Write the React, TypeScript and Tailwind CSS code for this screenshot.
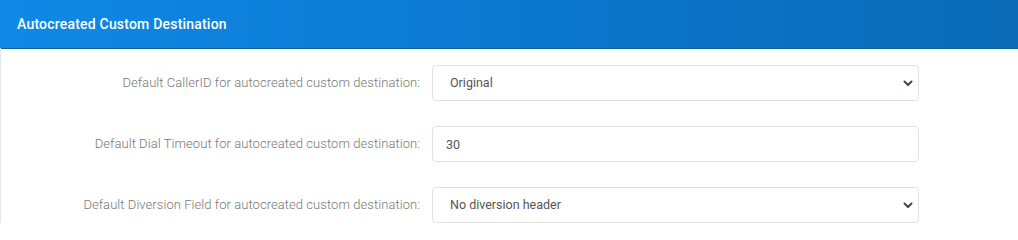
import type { ReactNode } from "react";

const rows: { label: string; kind: "select" | "input"; value: string }[] = [
  { label: "Default CallerID for autocreated custom destination:", kind: "select", value: "Original" },
  { label: "Default Dial Timeout for autocreated custom destination:", kind: "input", value: "30" },
  { label: "Default Diversion Field for autocreated custom destination:", kind: "select", value: "No diversion header" },
];

function Chevron() {
  return (
    <svg
      className="pointer-events-none absolute right-[6px] top-1/2 -translate-y-1/2"
      width="10"
      height="8"
      viewBox="0 0 10 8"
    >
      <path d="M1.5 2.5 L5 6 L8.5 2.5" fill="none" stroke="#3f4750" strokeWidth="2" strokeLinecap="round" strokeLinejoin="round" />
    </svg>
  );
}

function Field({ label, children }: { label: string; children: ReactNode }) {
  return (
    <div className="flex items-center">
      <label className="w-[419px] text-right text-[13px] font-light tracking-[0.06px] text-[#777]">{label}</label>
      <div className="ml-3 w-[487px]">{children}</div>
    </div>
  );
}

export default function App() {
  return (
    <div className="h-[240px] w-[1018px] bg-white font-['Roboto',sans-serif]">
      <div className="flex h-[48px] items-center bg-gradient-to-r from-[#0f89e6] via-[#0c78d0] to-[#0a6ab6] px-[17px] pt-[1px] shadow-[0_1px_0_#0b62a8]">
        <h3 className="text-[14px] font-medium tracking-[0.2px] text-white">Autocreated Custom Destination</h3>
      </div>
      <div className="flex flex-col gap-[25px] border-l border-[#e6e6e6] pt-[17px]">
        {rows.map((r) => (
          <Field key={r.label} label={r.label}>
            {r.kind === "select" ? (
              <div className="relative">
                <select
                  defaultValue={r.value}
                  className="h-[36px] w-full appearance-none rounded-[4px] border border-[#e2e2e2] bg-white pl-[17px] text-[12.5px] text-[#555] outline-none"
                >
                  <option>{r.value}</option>
                </select>
                <Chevron />
              </div>
            ) : (
              <input
                defaultValue={r.value}
                className="h-[36px] w-full rounded-[4px] border border-[#e2e2e2] bg-white pl-[13px] text-[12.5px] text-[#555] outline-none"
              />
            )}
          </Field>
        ))}
      </div>
    </div>
  );
}
